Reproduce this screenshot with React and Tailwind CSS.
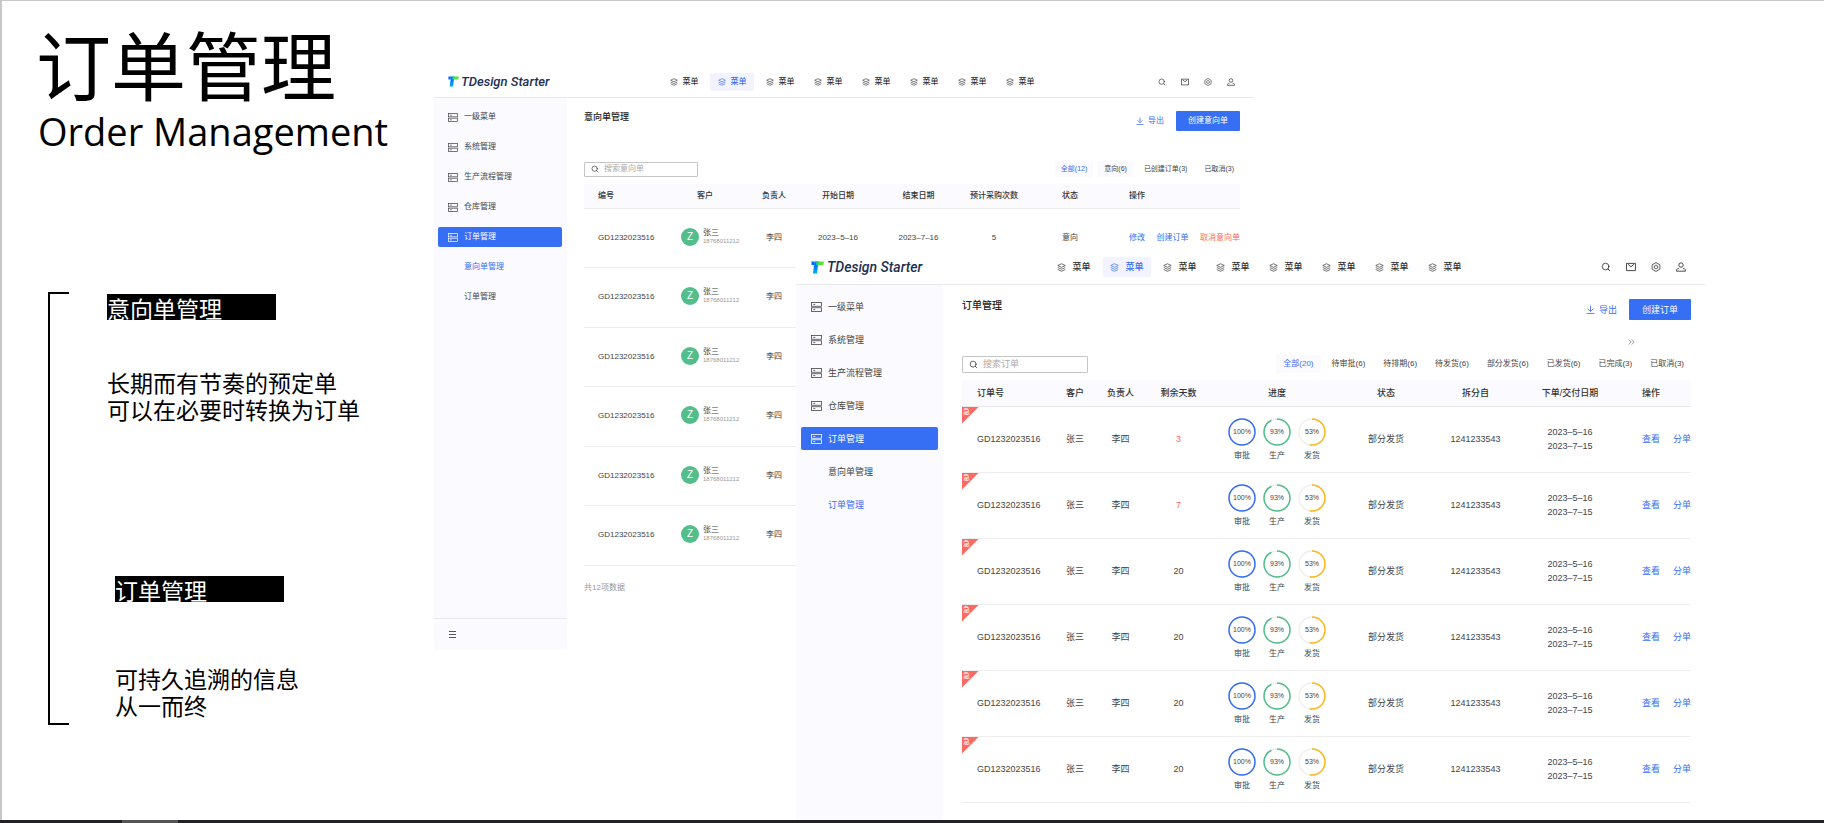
import { Search } from "lucide-react";

const intentRows = [1, 2, 3, 4, 5, 6];
const daysLeft = [3, 7, 20, 20, 20, 20];

const menus = [0, 1, 2, 3, 4, 5, 6, 7];
const sideItems = ["一级菜单", "系统管理", "生产流程管理", "仓库管理", "订单管理"];
const subItems = ["意向单管理", "订单管理"];

const orderTabs = [
  "待审批(6)",
  "待排期(6)",
  "待发货(6)",
  "部分发货(6)",
  "已发货(6)",
  "已完成(3)",
  "已取消(3)",
];

const Logo = ({ className, id }) => (
  <svg className={className} viewBox="0 0 26 26" aria-hidden="true">
    <defs>
      <linearGradient id={`${id}-green`} x1="0" x2="1">
        <stop offset="0" stopColor="#00b8c9" />
        <stop offset="0.45" stopColor="#4fe03c" />
        <stop offset="1" stopColor="#5be52b" />
      </linearGradient>
      <linearGradient id={`${id}-blue`} x1="0" y1="0" x2="0" y2="1">
        <stop offset="0" stopColor="#0064ff" />
        <stop offset="1" stopColor="#00a8ff" />
      </linearGradient>
    </defs>
    <path d="M1 1h6L6 8H1z" fill="#0064ff" />
    <path d="M7 1h8l-3 24H4l2-17z" fill={`url(#${id}-blue)`} />
    <path d="M9 1h17l-2 7H10z" fill={`url(#${id}-green)`} />
  </svg>
);

const LayersIcon = ({ className }) => (
  <svg
    className={className}
    viewBox="0 0 18 18"
    fill="none"
    stroke="currentColor"
    strokeWidth="1.4"
    aria-hidden="true"
  >
    <path d="M9 1.5l7.5 3.5L9 8.500L1.500 5z" />
    <path d="M1.500 9L9 12.500 16.500 9M1.500 13L9 16.500 16.500 13" />
  </svg>
);

const ServerIcon = ({ className }) => (
  <svg
    className={className}
    viewBox="0 0 22 20"
    fill="none"
    stroke="currentColor"
    strokeWidth="1.6"
    aria-hidden="true"
  >
    <rect x="1" y="1" width="20" height="7.500" />
    <rect x="1" y="11.500" width="20" height="7.500" />
    <path d="M4.500 4.800h4M4.500 15.200h4" />
  </svg>
);

const MailIcon = ({ className }) => (
  <svg
    className={className}
    viewBox="0 0 18 18"
    fill="none"
    stroke="currentColor"
    strokeWidth="1.6"
    aria-hidden="true"
  >
    <path d="M1 2.500h16v13H1zM3.500 4l5.500 4.500L14.500 4" />
  </svg>
);

const SettingIcon = ({ className }) => (
  <svg
    className={className}
    viewBox="0 0 18 18"
    fill="none"
    stroke="currentColor"
    strokeWidth="1.4"
    aria-hidden="true"
  >
    <path d="M9 1l7 4v8l-7 4-7-4V5z" />
    <path d="M9 5.500l3 1.700v3.600l-3 1.700-3-1.700V7.200z" />
  </svg>
);

const UserIcon = ({ className }) => (
  <svg
    className={className}
    viewBox="0 0 18 18"
    fill="none"
    stroke="currentColor"
    strokeWidth="1.6"
    aria-hidden="true"
  >
    <circle cx="9" cy="5.500" r="4" />
    <path d="M5.500 12H3l-2 2v2.500h16V14l-2-2h-2.500" />
  </svg>
);

const DownloadIcon = ({ className }) => (
  <svg
    className={className}
    viewBox="0 0 16 16"
    fill="none"
    stroke="currentColor"
    strokeWidth="1.5"
    aria-hidden="true"
  >
    <path d="M8 1v10M3 6.500l5 5 5-5M1 15h14" />
  </svg>
);

const ChevronsIcon = ({ className }) => (
  <svg
    className={className}
    viewBox="0 0 14 12"
    fill="none"
    stroke="currentColor"
    strokeWidth="1.600"
    aria-hidden="true"
  >
    <path d="M1.500 1l5 5-5 5M7.500 1l5 5-5 5" />
  </svg>
);

const Ring = ({ value, label, color }) => (
  <div className="flex flex-col items-center gap-1">
    <div className="relative size-7">
      <svg className="size-7 -rotate-90" viewBox="0 0 28 28" fill="none">
        <circle cx="14" cy="14" r="13" stroke="#eeeeee" strokeWidth="1.3" />
        <circle
          cx="14"
          cy="14"
          r="13"
          stroke={color}
          strokeWidth="1.5"
          pathLength="100"
          strokeDasharray={`${value} 100`}
        />
      </svg>
      <span className="absolute inset-0 flex items-center justify-center text-[7px]">
        {value}%
      </span>
    </div>
    <span className="text-[8px] leading-[11px]">{label}</span>
  </div>
);

const IntentWindow = () => (
  <section className="absolute left-[432px] top-[65px] w-[820px] bg-white text-[8px] leading-3 text-[#444]">
    <header className="flex h-8 items-center justify-between border-b border-[#e8e8e8] pl-[14px] pr-[19px]">
      <div className="flex w-[214px] items-center gap-[2px]">
        <Logo id="intent" className="size-[11px]" />
        <span className="font-[Roboto] text-[13px] font-medium italic text-[#1d2f52]">
          TDesign Starter
        </span>
      </div>
      <nav className="flex flex-1 gap-1">
        {menus.map((i) => (
          <a
            key={i}
            href="#"
            className={`flex h-[18px] w-11 items-center justify-center gap-[5px] rounded-[1px] font-medium ${
              i === 1 ? "bg-[#f2f3ff] text-[#366ef4]" : "text-[#333]"
            }`}
          >
            <LayersIcon className="size-2" />
            菜单
          </a>
        ))}
      </nav>
      <div className="flex gap-[15px] text-[#333]">
        <button aria-label="搜索"><Search className="size-2" /></button>
        <button aria-label="邮件"><MailIcon className="size-2" /></button>
        <button aria-label="设置"><SettingIcon className="size-2" /></button>
        <button aria-label="用户"><UserIcon className="size-2" /></button>
      </div>
    </header>

    <div className="flex">
      <aside className="flex w-[133px] flex-col justify-between bg-[#fbfaff]">
        <nav className="flex flex-col gap-[10px] pl-1 pr-[5px] pt-[9px]">
          {sideItems.map((item, i) => (
            <a
              key={item}
              href="#"
              className={`flex h-5 items-center gap-[6px] rounded-[2px] pl-[10px] ${
                i === 4 ? "bg-[#366ef4] text-white" : ""
              }`}
            >
              <ServerIcon className="h-[9px] w-[10px]" />
              {item}
            </a>
          ))}
          {subItems.map((item, i) => (
            <a
              key={item}
              href="#"
              className={`flex h-5 items-center pl-[26px] ${i === 0 ? "text-[#366ef4]" : ""}`}
            >
              {item}
            </a>
          ))}
        </nav>
        <div className="flex h-8 items-center border-t border-[#e8e8ee] pl-[15px]">
          <svg className="h-[7px] w-[7px]" viewBox="0 0 7 7" stroke="#555">
            <path d="M0 .5h7M0 3.5h7M0 6.5h7" />
          </svg>
        </div>
      </aside>

      <div className="flex h-[552px] flex-1 flex-col pl-[17px] pr-[14px]">
        <div className="flex items-start justify-between pt-[13px]">
          <h2 className="text-[9px] font-medium text-[#222]">意向单管理</h2>
          <div className="flex items-center gap-3">
            <button className="flex items-center gap-1 text-[#366ef4]">
              <DownloadIcon className="size-2" />
              导出
            </button>
            <button className="h-5 w-16 rounded-[1px] bg-[#366ef4] text-white">
              创建意向单
            </button>
          </div>
        </div>

        <div className="mt-[30px] flex items-center justify-between">
          <label className="flex h-[15px] w-[114px] items-center gap-[5px] rounded-[1px] border border-[#c5c5c5] px-[6px]">
            <Search className="size-2 shrink-0 text-[#333]" />
            <input
              className="w-full outline-none placeholder:text-[#aaa]"
              placeholder="搜索意向单"
            />
          </label>
          <div className="flex gap-[5px] text-[7px] leading-4">
            <button className="bg-[#fbfaff] px-[6px] text-[#366ef4]">全部(12)</button>
            <button className="bg-[#fbfaff] px-[6px]">意向(6)</button>
            <button className="px-[6px]">已创建订单(3)</button>
            <button className="px-[6px]">已取消(3)</button>
          </div>
        </div>

        <table className="mt-[7px] w-full table-fixed text-center">
          <thead>
            <tr className="h-6 border-b border-[#eee] bg-[#fbfaff] text-[#333] *:font-medium">
              <th className="w-[97px] pl-[14px] text-left">编号</th>
              <th className="w-[64px] pl-4 text-left">客户</th>
              <th className="w-[58px]">负责人</th>
              <th className="w-[70px]">开始日期</th>
              <th className="w-[91px]">结束日期</th>
              <th className="w-[60px]">预计采购次数</th>
              <th className="w-[92px]">状态</th>
              <th className="pl-[13px] text-left">操作</th>
            </tr>
          </thead>
          <tbody>
            {intentRows.map((id) => (
              <tr key={id} className="border-b border-[#eee] odd:h-[59px] even:h-[60px]">
                <td className="pl-[14px] text-left">GD1232023516</td>
                <td>
                  <div className="flex items-center gap-1 pb-[2px] text-left">
                    <span className="flex size-[18px] items-center justify-center rounded-full bg-[#53be8b] text-[10px] text-white">
                      Z
                    </span>
                    <div className="leading-[9px]">
                      <p>张三</p>
                      <p className="text-[6px] text-[#999]">18768011212</p>
                    </div>
                  </div>
                </td>
                <td>李四</td>
                <td>2023–5–16</td>
                <td>2023–7–16</td>
                <td>5</td>
                <td>意向</td>
                <td>
                  <div className="flex justify-between pl-[13px] text-[#366ef4]">
                    <a href="#">修改</a>
                    <a href="#">创建订单</a>
                    <a href="#" className="text-[#fa6a63]">取消意向单</a>
                  </div>
                </td>
              </tr>
            ))}
          </tbody>
        </table>
        <p className="mt-4 text-[#999]">共12项数据</p>
      </div>
    </div>
  </section>
);

const OrderWindow = () => (
  <section className="absolute bottom-0 left-[794px] top-[249px] flex w-[910px] flex-col bg-white text-[9px] leading-[14px] text-[#444]">
    <header className="flex h-[35px] shrink-0 items-center justify-between border-b border-[#e8e8e8] pl-[15px] pr-5">
      <div className="flex w-[239px] items-center gap-[3px]">
        <Logo id="order" className="size-[13px]" />
        <span className="font-[Roboto] text-[14px] font-medium italic text-[#1d2f52]">
          TDesign Starter
        </span>
      </div>
      <nav className="flex flex-1 gap-[5px]">
        {menus.map((i) => (
          <a
            key={i}
            href="#"
            className={`flex h-5 w-12 items-center justify-center gap-[6px] rounded-[2px] font-medium ${
              i === 1 ? "bg-[#f2f3ff] text-[#366ef4]" : "text-[#333]"
            }`}
          >
            <LayersIcon className="size-[9px]" />
            菜单
          </a>
        ))}
      </nav>
      <div className="flex gap-[15px] text-[#333]">
        <button aria-label="搜索"><Search className="size-[10px]" /></button>
        <button aria-label="邮件"><MailIcon className="size-[10px]" /></button>
        <button aria-label="设置"><SettingIcon className="size-[10px]" /></button>
        <button aria-label="用户"><UserIcon className="size-[10px]" /></button>
      </div>
    </header>

    <div className="flex flex-1">
      <aside className="w-[147px] bg-[#fbfaff]">
        <nav className="flex flex-col gap-[10px] px-[5px] pt-[10px]">
          {sideItems.map((item, i) => (
            <a
              key={item}
              href="#"
              className={`flex h-[23px] items-center gap-[6px] rounded-[2px] pl-[10px] ${
                i === 4 ? "bg-[#366ef4] text-white" : ""
              }`}
            >
              <ServerIcon className="h-[10px] w-[11px]" />
              {item}
            </a>
          ))}
          {subItems.map((item, i) => (
            <a
              key={item}
              href="#"
              className={`flex h-[23px] items-center pl-[27px] ${i === 1 ? "text-[#366ef4]" : ""}`}
            >
              {item}
            </a>
          ))}
        </nav>
      </aside>

      <div className="flex flex-1 flex-col pl-[19px] pr-[15px]">
        <div className="flex items-start justify-between pt-[14px]">
          <h2 className="text-[10px] font-medium text-[#222]">订单管理</h2>
          <div className="flex items-center gap-3">
            <button className="flex items-center gap-1 text-[#366ef4]">
              <DownloadIcon className="size-[9px]" />
              导出
            </button>
            <button className="h-[21px] w-[62px] rounded-[1px] bg-[#366ef4] text-white">
              创建订单
            </button>
          </div>
        </div>

        <button className="mr-[56px] mt-[19px] self-end text-[#777]" aria-label="更多">
          <ChevronsIcon className="h-[6px] w-[7px]" />
        </button>
        <div className="mt-[10px] flex items-center justify-between">
          <label className="flex h-[17px] w-[126px] items-center gap-[5px] rounded-[1px] border border-[#c5c5c5] px-[6px]">
            <Search className="size-[9px] shrink-0 text-[#333]" />
            <input
              className="w-full outline-none placeholder:text-[#aaa]"
              placeholder="搜索订单"
            />
          </label>
          <div className="flex gap-1 text-[8px] leading-[18px]">
            <button className="bg-[#fbfaff] px-[7px] text-[#366ef4]">全部(20)</button>
            {orderTabs.map((tab) => (
              <button key={tab} className="px-[7px]">{tab}</button>
            ))}
          </div>
        </div>

        <table className="mt-[7px] w-full table-fixed text-center">
          <thead>
            <tr className="h-[26px] border-b border-[#e8e8e8] bg-[#fbfaff] text-[#333] *:font-medium">
              <th className="w-[91px] pl-[15px] text-left">订单号</th>
              <th className="w-[44px]">客户</th>
              <th className="w-[47px]">负责人</th>
              <th className="w-[69px]">剩余天数</th>
              <th className="w-[128px]">进度</th>
              <th className="w-[90px]">状态</th>
              <th className="w-[89px]">拆分自</th>
              <th className="w-[100px]">下单/交付日期</th>
              <th className="pl-[22px] text-left">操作</th>
            </tr>
          </thead>
          <tbody>
            {daysLeft.map((days, i) => (
              <tr key={i} className="h-[66px] border-b border-[#eee]">
                <td className="relative pl-[15px] text-left">
                  <span className="absolute left-0 top-0 size-[17px] bg-[#fa6a63] pl-px text-[7px] leading-[10px] text-white [clip-path:polygon(0_0,100%_0,0_100%)]">
                    急
                  </span>
                  GD1232023516
                </td>
                <td>张三</td>
                <td>李四</td>
                <td className={days < 10 ? "text-[#fa6a63]" : ""}>{days}</td>
                <td>
                  <div className="flex justify-center gap-[7px]">
                    <Ring value={100} label="审批" color="#366ef4" />
                    <Ring value={93} label="生产" color="#53be8b" />
                    <Ring value={53} label="发货" color="#fbb91e" />
                  </div>
                </td>
                <td>部分发货</td>
                <td>1241233543</td>
                <td>
                  <p>2023–5–16</p>
                  <p>2023–7–15</p>
                </td>
                <td>
                  <div className="flex justify-between pl-[22px] text-[#366ef4]">
                    <a href="#">查看</a>
                    <a href="#">分单</a>
                  </div>
                </td>
              </tr>
            ))}
          </tbody>
        </table>
      </div>
    </div>
  </section>
);

const App = () => {
  return (
    <div className="flex h-screen flex-col overflow-hidden bg-white font-['Liberation_Sans','Noto_Sans_CJK_SC',sans-serif]">
      <main className="relative flex-1 border-l-2 border-t border-[#c8c8c8] text-black">
        <div className="w-[430px] font-['Noto_Sans_CJK_SC',sans-serif]">
          <h1 className="pl-[34px] pt-4 text-[75px] leading-[92px]">订单管理</h1>
          <p className="pl-9 pt-[2px] font-['Open_Sans'] text-[38px] leading-10">
            Order Management
          </p>

          <div className="ml-[46px] mt-[141px] flex text-[23px] leading-[27px]">
            <div className="h-[433px] w-[21px] border-2 border-r-0 border-black" />
            <div className="pl-[38px] pt-[2px]">
              <h3 className="h-[26px] w-[169px] bg-black pt-px text-white">意向单管理</h3>
              <p className="mt-[49px]">
                长期而有节奏的预定单
                <br />
                可以在必要时转换为订单
              </p>
              <div className="pl-2 pt-[153px]">
                <h3 className="h-[26px] w-[169px] bg-black pt-px text-white">订单管理</h3>
                <p className="mt-[63px]">
                  可持久追溯的信息
                  <br />
                  从一而终
                </p>
              </div>
            </div>
          </div>
        </div>

        <IntentWindow />
        <OrderWindow />
      </main>
      <footer className="h-[3px] bg-[#222226] pl-[122px]">
        <div className="h-full w-14 bg-[#555]" />
      </footer>
    </div>
  );
};

export default App;
